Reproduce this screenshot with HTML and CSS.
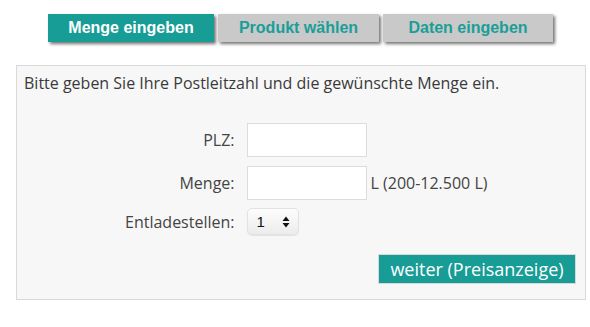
FILE: index.html
```html
<!DOCTYPE html>
<html lang="de">
<head>
<meta charset="utf-8">
<title>Menge eingeben</title>
<link rel="stylesheet" href="styles.css">
</head>
<body>
<nav class="steps">
  <span class="step step-active step-1">Menge eingeben</span>
  <span class="step step-2">Produkt wählen</span>
  <span class="step step-3">Daten eingeben</span>
</nav>
<form class="panel">
  <p class="intro">Bitte geben Sie Ihre Postleitzahl und die gewünschte Menge ein.</p>
  <div class="fields">
    <label class="label" for="plz">PLZ:</label>
    <input class="input" id="plz" type="text">
    <span class="hint"></span>

    <label class="label" for="menge">Menge:</label>
    <input class="input" id="menge" type="text">
    <span class="hint">L (200-12.500 L)</span>

    <label class="label" for="stellen">Entladestellen:</label>
    <span class="select-wrap">
      <select class="select" id="stellen">
        <option>1</option>
        <option>2</option>
        <option>3</option>
      </select>
      <svg class="select-arrows" width="8" height="12" viewBox="0 0 8 12"><path d="M4 0.5 L7.5 5 H0.5 Z M4 11.5 L7.5 7 H0.5 Z" fill="#111"/></svg>
    </span>
    <span class="hint"></span>
  </div>
  <div class="actions">
    <button class="submit" type="button">weiter (Preisanzeige)</button>
  </div>
</form>
</body>
</html>
```

FILE: styles.css
```css
html, body {
  margin: 0;
  padding: 0;
  background: #ffffff;
}

body {
  font-family: "Open Sans", "Liberation Sans", sans-serif;
  color: #444;
}

.steps {
  display: flex;
  justify-content: center;
  gap: 4px;
  padding-top: 14px;
  padding-left: 11px;
  height: 28px;
}

.step {
  display: flex;
  align-items: center;
  justify-content: center;
  height: 28px;
  background: #c9c9c9;
  color: #1a9e98;
  font-family: "Liberation Sans", Arial, sans-serif;
  font-weight: bold;
  font-size: 16px;
  box-shadow: 2px 2px 3px rgba(0, 0, 0, 0.55);
}

.step-1 { width: 166px; }
.step-2 { width: 161px; }
.step-3 { width: 170px; }

.step-active {
  background: #179c96;
  color: #ffffff;
}

.panel {
  box-sizing: border-box;
  margin: 23px 0 0 16px;
  width: 570px;
  height: 235px;
  border: 1px solid #d9d9d9;
  background: #f7f7f7;
  padding: 7px 9px 0 7px;
}

.intro {
  margin: 0;
  font-size: 16px;
  line-height: 20px;
  color: #3a3a3a;
}

.fields {
  display: grid;
  grid-template-columns: auto 120px 130px;
  justify-content: start;
  align-items: center;
  column-gap: 12px;
  row-gap: 9px;
  margin-top: 30px;
  margin-left: 101px;
}

.label {
  justify-self: end;
  font-size: 16px;
  color: #444;
}

.input {
  box-sizing: border-box;
  width: 120px;
  height: 34px;
  border: 1px solid #dcdcdc;
  background: #ffffff;
  margin: 0;
  padding: 0 6px;
  font: inherit;
}

.hint {
  font-size: 16px;
  color: #444;
  margin-left: -8px;
  white-space: nowrap;
}

.select-wrap {
  position: relative;
  display: inline-block;
  width: 52px;
  height: 27px;
  margin-top: -1px;
}

.select {
  -webkit-appearance: none;
  appearance: none;
  box-sizing: border-box;
  width: 52px;
  height: 27px;
  border: 1px solid #e2e2e2;
  border-radius: 5px;
  background: linear-gradient(#fdfdfd, #ececec);
  box-shadow: 0 1px 1px rgba(0, 0, 0, 0.08);
  padding: 0 0 0 9px;
  font-family: "Liberation Sans", Arial, sans-serif;
  font-size: 15px;
  color: #111;
  margin: 0;
}

.select-arrows {
  position: absolute;
  right: 9px;
  top: 8px;
  pointer-events: none;
}

.actions {
  display: flex;
  justify-content: flex-end;
  margin-top: 19px;
}

.submit {
  height: 30px;
  width: 198px;
  border: 1px solid #d8d8d8;
  background: #179c96;
  color: #ffffff;
  font-family: "Open Sans", sans-serif;
  font-size: 18px;
  padding: 0;
  margin: 0;
}
```
